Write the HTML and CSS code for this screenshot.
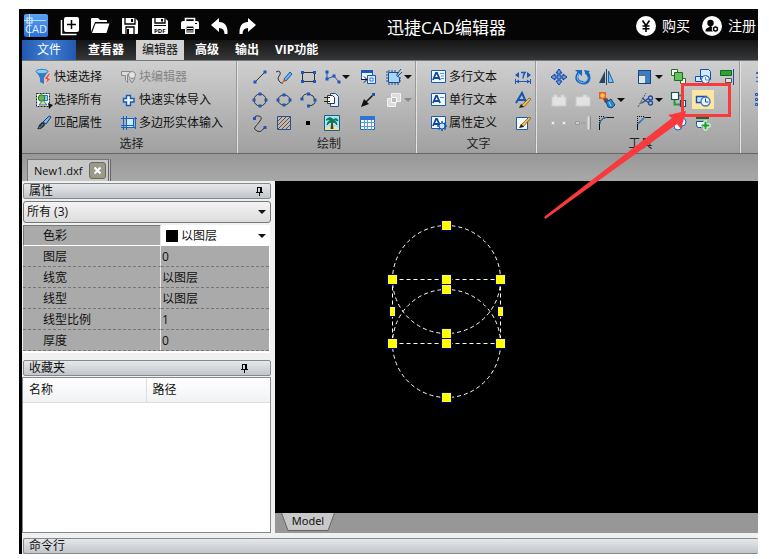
FILE: index.html
```html
<!DOCTYPE html>
<html lang="zh-CN">
<head>
<meta charset="utf-8">
<title>迅捷CAD编辑器</title>
<link rel="stylesheet" href="styles.css">
</head>
<body>
<div class="app">
  <header class="titlebar">
    <svg class="logo" viewBox="0 0 24 23"><defs><linearGradient id="lg" x1="0" y1="0" x2="0" y2="1"><stop offset="0" stop-color="#5aa2f2"/><stop offset="1" stop-color="#2c6fdc"/></linearGradient></defs><rect width="24" height="23" rx="2" fill="url(#lg)"/><path d="M0 6.500h22M5.500 0v23" stroke="#b8dcff"/><rect x="3" y="4" width="5" height="5" fill="none" stroke="#e4f2ff"/><text x="1" y="19" class="logo-text">CAD</text></svg>
    <nav class="quick">
      <button aria-label="新建"><svg viewBox="0 0 20 20"><rect x="4" y="1" width="15" height="15" rx="2" fill="#fff"/><path d="M1.500 4v14.500h15" fill="none" stroke="#fff" stroke-width="1.500"/><path d="M11.500 4v9M7 8.500h9" stroke="#000" stroke-width="1.500"/></svg></button>
      <button aria-label="打开"><svg viewBox="0 0 20 20"><path d="M1 16V3q0-1 1-1h6l2 2h6q1 0 1 1v1H5z" fill="#fff"/><path d="M5.500 7.500H19.500L16.500 17H2z" fill="#fff"/></svg></button>
      <button aria-label="保存"><svg viewBox="0 0 20 20"><path d="M2 3q0-1 1-1h12l3 3v12q0 1-1 1H3q-1 0-1-1z" fill="#fff"/><path d="M5 2v6h10V2M6 18v-7h8v7" fill="#fff" stroke="#000" stroke-width="1.300"/><path d="M12 3v3M8 13v5" stroke="#000" stroke-width="2"/></svg></button>
      <button aria-label="保存为PDF"><svg viewBox="0 0 20 20"><path d="M2 3q0-1 1-1h12l3 3v12q0 1-1 1H3q-1 0-1-1z" fill="#fff"/><path d="M5 2v5h10V2" fill="#fff" stroke="#000" stroke-width="1.300"/><path d="M12 3v2.500" stroke="#000" stroke-width="2"/><path d="M4 9.500h12" stroke="#000"/><text x="4" y="17" class="pdf-text">PDF</text></svg></button>
      <button aria-label="打印"><svg viewBox="0 0 20 20"><path d="M5.500 5V2.500h9V5" fill="none" stroke="#fff" stroke-width="1.600"/><path d="M1 7q0-2 2-2h14q2 0 2 2v6h-4v-3H5v3H1z" fill="#fff"/><rect x="5.800" y="9.800" width="8.400" height="7.400" fill="#000" stroke="#fff" stroke-width="1.600"/><path d="M7 12.500h6M7 15h6" stroke="#fff"/><path d="M15 7.500h2" stroke="#000"/></svg></button>
      <button aria-label="撤销"><svg viewBox="0 0 20 20"><path d="M1 9 9 2v4q9 0 8.500 12h-3q0-6-5.500-6v4z" fill="#fff"/></svg></button>
      <button aria-label="重做" class="redo"><svg viewBox="0 0 20 20"><path d="M19 9 11 2v4Q2 6 2.500 18h3q0-6 5.500-6v4z" fill="#fff"/></svg></button>
    </nav>
    <h1>迅捷CAD编辑器</h1>
    <div class="account">
      <a href="#"><svg viewBox="0 0 20 20"><circle cx="10" cy="10" r="10" fill="#fff"/><path d="M6.500 4.500 10 9.500l3.500-5M10 9v7M6.500 10h7M6.500 12.800h7" fill="none" stroke="#000" stroke-width="1.600"/></svg>购买</a>
      <a href="#"><svg viewBox="0 0 20 20"><circle cx="10" cy="10" r="10" fill="#fff"/><circle cx="8.500" cy="7" r="3.200" fill="#000"/><path d="M7.500 8h2v3q2 .5 3 2v2.500H3.500Q3 12 7.500 11z" fill="#000"/><circle cx="13.500" cy="13" r="3.300" fill="#000" stroke="#fff"/><circle cx="13.500" cy="13" r="1.200" fill="#fff"/></svg>注册</a>
    </div>
  </header>

  <nav class="menu">
    <button class="file">文件</button>
    <button>查看器</button>
    <button class="active">编辑器</button>
    <button>高级</button>
    <button>输出</button>
    <button>VIP功能</button>
  </nav>

  <section class="ribbon">
    <div class="group select">
      <div class="tools">
        <button><svg viewBox="0 0 20 20"><path d="M2 4q6 3 12 0l-4 7v6l-4-2v-4z" fill="#2d7fc4"/><ellipse cx="8" cy="4.500" rx="6" ry="2.200" fill="#8dccf2" stroke="#2d7fc4"/><path d="m15 6-5 6 3 .5-2 5 6-6-3-.5 3-5z" fill="#f04b3e" stroke="#fff" stroke-width=".5"/></svg>快速选择</button>
        <button class="off"><svg viewBox="0 0 20 20"><path d="M2.500 4.500h9v3h-3v8l-2-2v-5h-4z" fill="#ddd" stroke="#888"/><circle cx="13" cy="8" r="3.500" fill="#e4e4e4" stroke="#888"/><path d="m10 12 3 4 3-5" fill="none" stroke="#888"/></svg>块编辑器</button>
        <button><svg viewBox="0 0 20 20"><rect x="2.500" y="3.500" width="13" height="13" fill="#e8f4ee" stroke="#222" stroke-dasharray="2 1"/><path d="M8.500 5.500h5v5h-5z" fill="#8fd0f5" stroke="#2a79ba"/><circle cx="7.500" cy="8" r="3.200" fill="#69b553" stroke="#267029"/><path d="m5 15 4-5 4 5z" fill="#f5d850" stroke="#2a79ba"/><path d="m14 13 5 2-4 4z" fill="#111"/></svg>选择所有</button>
        <button><svg viewBox="0 0 20 20"><path d="M7.500 5.500h4v3H15V12h-3.500v3.500h-4V12H4.500V8.500h3z" fill="#eef8ff" stroke="#1757b5" stroke-width="1.400"/></svg>快速实体导入</button>
        <button><svg viewBox="0 0 20 20"><path d="m9 9 5-5q2-2 3 0l-5 7z" fill="#7db8f0" stroke="#153e78"/><path d="M8 9q3 0 3 3-3 5-8 4 1-1 2-4z" fill="#273444"/><path d="M5 15q3-1 4-4" stroke="#5d88b8" fill="none"/></svg>匹配属性</button>
        <button><svg viewBox="0 0 20 20"><rect x="7" y="6" width="8" height="8" fill="#cbe8ff"/><path d="M4.500 3v14M7.500 3v14M2 5.500h16M2 14.500h15M16.500 4v12M14.500 6v8M2 12.500h13" fill="none" stroke="#1264c8"/></svg>多边形实体输入</button>
      </div>
      <h2>选择</h2>
    </div>

    <div class="group draw">
      <div class="tools">
        <button aria-label="直线"><svg viewBox="0 0 20 20"><path d="m5 15 10-10" stroke="#333"/><path d="M3.500 13.500h3v3h-3zM13.500 3.500h3v3h-3z" fill="#1c56b8"/></svg></button>
        <button aria-label="草图"><svg viewBox="0 0 20 20"><path d="M2 5q3-2 4 0t-1 4 0 5 4 2" fill="none" stroke="#333"/><path d="m10 12 6-7 2 2-6 7z" fill="#6cb4ee" stroke="#1c5aa8"/><path d="m8 16 2-4 2 2z" fill="#e84a2c"/></svg></button>
        <button aria-label="矩形"><svg viewBox="0 0 20 20"><path d="M4.500 5.500h12v9h-12z" fill="none" stroke="#333"/><path d="M3 4h3v3H3zM15 4h3v3h-3zM3 13h3v3H3zM15 13h3v3h-3z" fill="#1c56b8"/></svg></button>
        <button aria-label="多段线"><svg viewBox="0 0 20 20"><path d="M5 5v7l7-3 5 6" fill="none" stroke="#1c56b8"/><path d="M3.500 3.500h3v3h-3zM3.500 10.500h3v3h-3zM10.500 7.500h3v3h-3zM15.500 13.500h3v3h-3z" fill="#1c56b8"/></svg><i></i></button>
        <button aria-label="插入块"><svg viewBox="0 0 20 20"><path d="M3.500 3.500h11v9h-11z" fill="#eaf5ff" stroke="#1c56b8"/><path d="M3 3h12v3H3z" fill="#1c56b8"/><path d="M9.500 8.500h8v8h-8z" fill="#d7edff" stroke="#1c56b8"/><path d="M12 11h3v3h-3z" fill="#fff" stroke="#2f7acd"/><path d="M3 12.500h6m-3-3 3 3-3 3" fill="none" stroke="#111"/></svg></button>
        <button aria-label="边界"><svg viewBox="0 0 20 20"><path d="M4.500 5.500h10l-2 3 3 2v5h-11z" fill="#a8d4f5" stroke="#174e9c"/><path d="M2 5h2m-2 3h2m-2 3h2m-2 3h2m1-11v2m3-2v2m3-2v2m-6 11v2m3-2v2m3-2v2m3-2v2m1-7h2m-2 3h2M17 2l-4 5m5-2-4 4" stroke="#174e9c"/></svg><i></i></button>

        <button aria-label="圆"><svg viewBox="0 0 20 20"><circle cx="10" cy="10" r="6" fill="none" stroke="#333"/><path d="M8.500 2.500h3v3h-3zM8.500 14.500h3v3h-3zM2.500 8.500h3v3h-3zM14.500 8.500h3v3h-3z" fill="#1c56b8"/></svg></button>
        <button aria-label="椭圆"><svg viewBox="0 0 20 20"><ellipse cx="10" cy="10" rx="6" ry="5" fill="none" stroke="#333"/><path d="M8.500 3.500h3v3h-3zM8.500 13.500h3v3h-3zM2.500 8.500h3v3h-3zM14.500 8.500h3v3h-3z" fill="#1c56b8"/></svg></button>
        <button aria-label="圆弧"><svg viewBox="0 0 20 20"><path d="M4 8q2-5 7-4t6 6-6 6" fill="none" stroke="#333"/><path d="M2.500 7.500h3v3h-3zM9 2.500h3v3H9zM15.500 8.500h3v3h-3zM9 14.500h3v3H9z" fill="#1c56b8"/></svg></button>
        <button aria-label="复制块"><svg viewBox="0 0 20 20"><path d="M8.500 3.500h5l3 3v10h-8z" fill="#e6f0fa" stroke="#24528c"/><path d="M5.500 5.500h5l2 2v6h-7z" fill="#fff" stroke="#333"/><path d="M2 7.500h6M2 11.500h6" stroke="#222"/></svg></button>
        <button aria-label="射线"><svg viewBox="0 0 20 20"><path d="m6 14 9-9" stroke="#111" stroke-width="1.500"/><path d="m3 17 3-8 5 5z" fill="#111"/><path d="M14 3h3v3h-3z" fill="#1c56b8"/></svg></button>
        <button aria-label="遮罩" class="off"><svg viewBox="0 0 20 20"><path d="M7.500 3.500h9v8h-9zM3.500 8.500h8v8h-8z" fill="#ddd" stroke="#f2f2f2"/><path d="M7.500 7.500h5v5h-5z" fill="#bbb" stroke="#fafafa"/></svg><i></i></button>

        <button aria-label="样条曲线"><svg viewBox="0 0 20 20"><path d="M4 5q1-3 5-2t1 5-5 6 2 4 7-3" fill="none" stroke="#333"/><path d="M3 4h3v3H3zM13.500 13h3v3h-3z" fill="#1c56b8"/></svg></button>
        <button aria-label="填充"><svg viewBox="0 0 20 20"><path d="M3.500 3.500h13v13h-13z" fill="#c3b8ae" stroke="#24528c"/><path d="m4 8 4-4M4 12l8-8M4 16 16 4M8 16l8-8M12 16l4-4" stroke="#555"/></svg></button>
        <button aria-label="点"><svg viewBox="0 0 20 20"><path d="M8 8h4v4H8z" fill="#000"/></svg></button>
        <button aria-label="图像"><svg viewBox="0 0 20 20"><path d="M2.500 2.500h15v15h-15z" fill="#a8e4f4" stroke="#1a6088"/><path d="M3 15q7-3 14 0v2H3z" fill="#f0e2a0"/><path d="m9.500 7-1 9h3l-1-9z" fill="#5b3d1c"/><path d="M10 7Q7 3 4 7q3-1 5 1-4 0-4 4 2-3 5-3 4 0 5 3 0-4-4-4 2-2 5 0-1-4-5-1-1-3-4-2 2 0 3 2z" fill="#087a55" stroke="#087a55"/></svg></button>
        <button aria-label="表格"><svg viewBox="0 0 20 20"><path d="M2.500 3.500h14v13h-14z" fill="#fff" stroke="#2565bd"/><path d="M2 3h15v4H2z" fill="#2d75d2"/><path d="M3 9.500h14M3 13.500h14M6.500 7v10M9.500 7v10M13.500 7v10" stroke="#569bde"/></svg></button>
      </div>
      <h2>绘制</h2>
    </div>

    <div class="group text">
      <div class="tools">
        <button><svg viewBox="0 0 20 20"><path d="M2.500 3.500h14v12h-14z" fill="#f2f9ff" stroke="#1c5ab0"/><path d="m4 13 3-7h1l3 7M5 11h5" fill="none" stroke="#1048a0" stroke-width="1.800"/><path d="M11 6.500h4M12 9h3M12 11.500h3" stroke="#5591d5"/></svg>多行文本</button>
        <button aria-label="标注文字"><svg viewBox="0 0 20 20"><path d="M3 14.500h14M2.500 12v5M17.500 12v5" stroke="#1c56b8"/><path d="m2 8 4-3v6zM18 8l-4-3v6z" fill="#1c56b8"/><path d="M8 5.500h4q-2 3-2 6" fill="none" stroke="#1c56b8" stroke-width="1.500"/><path d="m3 14.500 3-2v4zM17 14.500l-3-2v4z" fill="#1c56b8"/></svg></button>
        <button><svg viewBox="0 0 20 20"><path d="M2.500 3.500h14v12h-14z" fill="#f2f9ff" stroke="#1c5ab0"/><path d="m4 13 3-7h1l3 7M5 11h5" fill="none" stroke="#1048a0" stroke-width="1.800"/><path d="M11 7.500h4" stroke="#5591d5"/></svg>单行文本</button>
        <button aria-label="文字样式"><svg viewBox="0 0 20 20"><path d="M3 13 9 3l4 9M5 10h7" fill="none" stroke="#1755b5" stroke-width="2"/><path d="m8 16 8-8 2 1-7 8z" fill="#f3ba45" stroke="#725120" stroke-width=".7"/><path d="m6 18 2-4 3 3z" fill="#222"/></svg></button>
        <button><svg viewBox="0 0 20 20"><path d="M2.500 3.500h14v12h-14z" fill="#f2f9ff" stroke="#1c5ab0"/><path d="m4 13 3-7h1l3 7M5 11h5" fill="none" stroke="#1048a0" stroke-width="1.800"/><path d="M13 8v10M8 13h10M9.500 9.500l7 7M16.500 9.500l-7 7" stroke="#1755a7" stroke-width="1.500"/><circle cx="13" cy="13" r="3" fill="#c3e2ff" stroke="#1755a7"/></svg>属性定义</button>
        <button aria-label="编辑文字"><svg viewBox="0 0 20 20"><path d="M3.500 4.500h11v12h-11z" fill="#f8fcff" stroke="#1c5ab0"/><path d="m8 12 8-8 2 1-8 9z" fill="#f3ba45" stroke="#725120" stroke-width=".7"/><path d="m6 15 2-4 3 3z" fill="#222"/></svg></button>
      </div>
      <h2>文字</h2>
    </div>

    <div class="group modify">
      <div class="tools">
        <button aria-label="移动"><svg viewBox="0 0 20 20"><path d="m10 2 3 4h-2v3h3V7l4 3-4 3v-2h-3v3h2l-3 4-3-4h2v-3H6v2l-4-3 4-3v2h3V6H7z" fill="#5c9aed" stroke="#143e9c"/></svg></button>
        <button aria-label="旋转"><svg viewBox="0 0 20 20"><path d="M6 5q-5 7 1 10 8 3 9-4 0-4-3-6" fill="none" stroke="#1768bd" stroke-width="3"/><path d="M6 6q-4 6 1 9 7 2 8-5" fill="none" stroke="#74bfff"/><path d="M2 3h7l0 6zM11 3l6 1-4 4z" fill="#1768bd"/></svg></button>
        <button aria-label="镜像"><svg viewBox="0 0 20 20"><path d="M8 4v12H2z" fill="#234666"/><path d="M11.500 4v11.500h5z" fill="#76bdf2" stroke="#24649a"/><path d="M9.500 2v16" stroke="#234666"/></svg></button>
        <button aria-label="缩放"><svg viewBox="0 0 20 20"><path d="M3 3h13v14h-5V8H3z" fill="#387ec5"/><path d="M3.500 3.500h12v13h-12z" fill="none" stroke="#184482"/><path d="M4 9h7v7H4z" fill="#d8e6f0"/><path d="M3.500 8.500h7v8" fill="none" stroke="#111" stroke-dasharray="1 1"/></svg><i></i></button>
        <button aria-label="置于前"><svg viewBox="0 0 20 20"><path d="M2.500 2.500h6v6h-6zM11.500 11.500h5v5h-5z" fill="#f7fff7" stroke="#247026"/><path d="M5.500 5.500h8v8h-8z" fill="#67c15c" stroke="#15701b"/></svg></button>
        <button aria-label="置于后"><svg viewBox="0 0 20 20"><path d="M7.500 2.500h8l2 2v8h-10zM2.500 9.500h8v5h-8z" fill="#d2e9ff" stroke="#174da2"/><circle cx="12.500" cy="12.500" r="4" fill="#e9f5ff" stroke="#174da2"/><path d="M12.500 10v3h4" fill="none" stroke="#5591d5"/></svg></button>
        <button aria-label="对齐"><svg viewBox="0 0 20 20"><path d="M3.500 3.500h11v5h-11z" fill="#24a833" stroke="#17681c"/><path d="M8.500 11.500h6v4h-6z" fill="#ddd" stroke="#555"/><path d="M16.500 2v16" stroke="#174da2"/></svg></button>

        <button aria-label="编组" class="off"><svg viewBox="0 0 20 20"><path d="M3 7h2V5h3v2h4V5h3v2h2v9H3z" fill="#e2e2e2" stroke="#ccc"/></svg></button>
        <button aria-label="取消编组" class="off"><svg viewBox="0 0 20 20"><path d="M3 7h7V5h4v2h3v9H3z" fill="#e2e2e2" stroke="#ccc"/></svg></button>
        <button aria-label="分解"><svg viewBox="0 0 20 20"><path d="M2 2h7v7H2z" fill="#eb5e28"/><circle cx="5.500" cy="5.500" r="2.200" fill="#ffc65a"/><path d="m6 9 4-1 2 3-4 2z" fill="#704830"/><path d="m9 12 5-3 4 6-3 3-4-1z" fill="#258ad3" stroke="#134d85"/><path d="m12 12 2 4" stroke="#aee3ff"/></svg><i></i></button>
        <button aria-label="修剪"><svg viewBox="0 0 20 20"><path d="m3 17 8-14M5 13h3" stroke="#555" stroke-dasharray="2 1"/><path d="m7 8 7 5m-7 0 7-5" stroke="#234c9a" stroke-width="1.300"/><circle cx="15.500" cy="8" r="2" fill="none" stroke="#234c9a" stroke-width="1.300"/><circle cx="15.500" cy="13" r="2" fill="none" stroke="#234c9a" stroke-width="1.300"/></svg><i></i></button>
        <button aria-label="顺序"><svg viewBox="0 0 20 20"><path d="M9 5.500h4.500V10M5.500 9v5.500H11" fill="none" stroke="#269a36" stroke-width="2"/><path d="M2.500 2.500h7v7h-7zM11.500 10.500h5v6h-5z" fill="#f6fffb" stroke="#174f5e" stroke-width="1.200"/></svg></button>
        <button aria-label="轮廓" class="lit"><svg viewBox="0 0 20 20"><path d="M3.500 6.500h10v6h-10z" fill="#c8e6ff" stroke="#174da2" stroke-width="1.400"/><circle cx="12.500" cy="11.500" r="4.500" fill="#e9f5ff" stroke="#4a78be" stroke-width="1.400"/><path d="M12.500 8.500v3.500h3" fill="none" stroke="#174da2"/></svg></button>
        <span></span>

        <button aria-label="打断" class="off"><svg viewBox="0 0 20 20"><path d="M2.500 8.500h3v3h-3zM13.500 8.500h3v3h-3z" fill="#eee" stroke="#bbb"/><path d="M7 10h1M11 10h1" stroke="#aaa"/></svg></button>
        <button aria-label="延伸" class="off"><svg viewBox="0 0 20 20"><path d="M2.500 8.500h4v3h-4zM8 10h5" fill="#ccc" stroke="#999"/><path d="M15.500 3.500v13" stroke="#ddd" stroke-width="2"/><path d="M17.500 3.500v13" stroke="#888"/></svg></button>
        <button aria-label="圆角"><svg viewBox="0 0 20 20"><path d="M2.500 17v-6q1-6 7-6.500H17" fill="none" stroke="#111"/><path d="M2 3.500h6M2.500 3v7" stroke="#111" stroke-dasharray="1 1"/><path d="M3 11q0-6 7-7" fill="none" stroke="#2678c5"/></svg></button>
        <button aria-label="倒角"><svg viewBox="0 0 20 20"><path d="M2.500 17v-6l7-6.500H16" fill="none" stroke="#111"/><path d="M2 3.500h7M2.500 3v7" stroke="#111" stroke-dasharray="1 1"/><path d="m3 11 7-7" stroke="#2678c5" stroke-width="1.500"/></svg></button>
        <button aria-label="链接"><svg viewBox="0 0 20 20"><circle cx="9" cy="13" r="4" fill="#eaf5ff" stroke="#2462b4"/><circle cx="13" cy="9" r="4" fill="#eaf5ff" stroke="#2462b4"/></svg></button>
        <button aria-label="添加"><svg viewBox="0 0 20 20"><path d="M3 3h13v3H3z" fill="#176a26"/><path d="M3.500 8.500h11v6h-9q-2 0-2-3z" fill="#e9f5ff" stroke="#174d82"/><path d="M11 8h3v3h3v3h-3v3h-3v-3H8v-3h3z" fill="#21a52e" stroke="#f4fff4"/></svg></button>
      </div>
      <h2>工具</h2>
    </div>

    <div class="group more">
      <div class="tools">
        <button aria-label="图层"><svg viewBox="0 0 20 20"><path d="m3 6 7-3 7 3-7 3zM3 10l7 3 7-3M3 14l7 3 7-3" fill="#c6e4ff" stroke="#1c56b8"/></svg></button>
        <button aria-label="阵列"><svg viewBox="0 0 20 20"><path d="M2.500 3.500h2v2h-2zM2.500 8.500h2v2h-2zM2.500 13.500h2v2h-2zM7.500 3.500h2v2h-2zM7.500 8.500h2v2h-2zM7.500 13.500h2v2h-2z" fill="#8fc1f3" stroke="#1c56b8"/></svg></button>
      </div>
    </div>
  </section>

  <div class="docs">
    <div class="doc">New1.dxf<button aria-label="关闭"><svg viewBox="0 0 9 9"><path d="m1.500 1.500 6 6m0-6-6 6" stroke="#fff" stroke-width="2"/></svg></button></div>
  </div>

  <main class="work">
    <aside class="side">
      <h3 class="bar">属性<svg class="pin" viewBox="0 0 9 10"><path d="M2.500 1v5M2 1.500h4M5.500 1v5M6.500 1v5M1 6.500h7M4.500 6v4" stroke="#000"/></svg></h3>
      <label class="combo"><select aria-label="选择对象"><option>所有 (3)</option></select><i></i></label>
      <table class="props">
        <tr class="current"><th>色彩</th><td><label class="color"><span class="swatch"></span><select aria-label="色彩"><option>以图层</option></select><i></i></label></td></tr>
        <tr><th>图层</th><td>0</td></tr>
        <tr><th>线宽</th><td>以图层</td></tr>
        <tr><th>线型</th><td>以图层</td></tr>
        <tr><th>线型比例</th><td>1</td></tr>
        <tr><th>厚度</th><td>0</td></tr>
      </table>
      <h3 class="bar fav">收藏夹<svg class="pin" viewBox="0 0 9 10"><path d="M2.500 1v5M2 1.500h4M5.500 1v5M6.500 1v5M1 6.500h7M4.500 6v4" stroke="#000"/></svg></h3>
      <div class="list">
        <table><tr><th>名称</th><th>路径</th></tr></table>
      </div>
    </aside>
    <section class="view">
      <svg class="drawing">
        <g fill="none" stroke="#fff" stroke-dasharray="4 3">
          <circle cx="171.500" cy="98.500" r="54"/>
          <circle cx="171.500" cy="162.500" r="54"/>
          <path d="M117.500 98.500h108M117.500 162.500h108M117.500 98.500v64M225.500 98.500v64"/>
        </g>
        <g fill="#ff0" stroke="#00008c">
          <rect x="114.500" y="125.500" width="6" height="10"/>
          <rect x="222.500" y="125.500" width="6" height="10"/>
          <rect x="166.500" y="39.500" width="10" height="10"/>
          <rect x="112.500" y="93.500" width="10" height="10"/>
          <rect x="166.500" y="93.500" width="10" height="10"/>
          <rect x="220.500" y="93.500" width="10" height="10"/>
          <rect x="166.500" y="103.500" width="10" height="10"/>
          <rect x="166.500" y="147.500" width="10" height="10"/>
          <rect x="112.500" y="157.500" width="10" height="10"/>
          <rect x="166.500" y="157.500" width="10" height="10"/>
          <rect x="220.500" y="157.500" width="10" height="10"/>
          <rect x="166.500" y="211.500" width="10" height="10"/>
        </g>
      </svg>
      <div class="sheets"><button><svg viewBox="0 0 54 19"><path d="M.5 0 7 17.500h40L53.500 0" fill="#c8c8c8" stroke="#666"/></svg><span>Model</span></button></div>
    </section>
  </main>
  <h3 class="bar command">命令行</h3>

  <svg class="callout" viewBox="0 0 190 140">
    <rect x="138.500" y="4.500" width="47" height="31" fill="none" stroke="#f83a3c" stroke-width="3"/>
    <path d="M1.500 139 0 137 128 38 124 35 142 31 137 49 133 44z" fill="#f83a3c"/>
  </svg>
</div>
</body>
</html>
```
FILE: styles.css
```css
* {
  box-sizing: border-box;
}

body {
  margin: 0;
  background: #fff;
  color: #111;
  font: 12px/20px "Open Sans", "Noto Sans CJK SC", sans-serif;
}

h1, h2, h3 {
  margin: 0;
  font-weight: 400;
}

button, select {
  margin: 0;
  padding: 0;
  border: 0;
  background: none;
  color: inherit;
  font: inherit;
}

svg {
  display: block;
  flex: none;
}

/* small drop-down arrow */
i {
  flex: none;
  border: 4px solid transparent;
  border-top-color: #111;
  border-bottom-width: 0;
}

.app {
  position: relative;
  display: flex;
  flex-direction: column;
  height: calc(100vh - 14px);
  margin: 9px 11px 5px 19px;
  border-left: 3px solid #000;
  background: #f0f0f0;
  overflow: hidden;
}

/* title bar */
.titlebar {
  display: flex;
  align-items: center;
  height: 31px;
  padding: 2px 2px 0;
  background: #050505;
  color: #fff;
}

.logo {
  width: 24px;
  height: 23px;
}

.logo-text {
  fill: #e4f2ff;
  font-size: 11px;
}

.pdf-text {
  fill: #000;
  font-size: 6px;
  font-weight: 700;
}

.quick {
  display: flex;
  gap: 10px;
  margin-left: 12px;
}

.quick svg {
  width: 20px;
  height: 20px;
}

.quick .redo {
  margin-left: -3px;
}

.titlebar h1 {
  flex: 1;
  padding-top: 4px;
  font-size: 17px;
  line-height: 24px;
  text-align: center;
}

.account {
  display: flex;
  gap: 12px;
}

.account a {
  display: flex;
  align-items: center;
  gap: 6px;
  color: #fff;
  font-size: 14px;
  text-decoration: none;
}

.account svg {
  width: 20px;
  height: 20px;
}

/* menu tabs */
.menu {
  display: flex;
  height: 20px;
  background: linear-gradient(#151515, #363739);
  color: #fff;
  font-weight: 700;
}

.menu button {
  padding: 0 8px;
}

.menu .file {
  width: 54px;
  margin-right: 4px;
  background: linear-gradient(90deg, #2358b0, #3f7fd4 50%, #2358b0);
  font-weight: 400;
}

.menu .active {
  padding: 0 6px;
  margin: 0 3px 0 4px;
  background: #d2d2d2;
  color: #111;
  font-weight: 400;
}

/* ribbon */
.ribbon {
  display: flex;
  height: 94px;
  border-top: 1px solid #777;
  border-bottom: 1px solid #666;
  background: linear-gradient(#cfcfcf, #a0a0a0);
}

.group {
  flex: none;
  padding: 4px 0 0 10px;
  border-right: 1px solid #e2e2e2;
  box-shadow: -1px 0 #999 inset;
}

.group h2 {
  padding-right: 6px;
  color: #222;
  font-size: 12px;
  line-height: 20px;
  text-align: center;
}

.tools {
  display: grid;
  grid-auto-rows: 23px;
}

.tools button {
  display: flex;
  align-items: center;
  padding: 0 2px;
  white-space: nowrap;
}

.tools svg {
  width: 20px;
  height: 20px;
}

.tools .off {
  color: #858585;
}

.tools .off i {
  border-top-color: #888;
}

.select {
  width: 216px;
}

.select .tools {
  grid-template-columns: 85px auto;
}

.draw {
  width: 179px;
}

.draw .tools {
  grid-template-columns: 24px 24px 24px 36px 26px 34px;
}

.text {
  width: 120px;
}

.text .tools {
  grid-template-columns: 84px 24px;
}

.modify {
  width: 204px;
}

.modify .tools {
  grid-template-columns: 24px 24px 38px 34px 24px 24px 24px;
}

.modify .lit {
  justify-self: start;
  padding: 0 1px;
  margin: 2px 1px;
  background: #fbe6a2;
}

.more {
  flex: 1;
  min-width: 0;
  border: 0;
  box-shadow: none;
  overflow: hidden;
}

/* open documents */
.docs {
  display: flex;
  align-items: flex-end;
  height: 27px;
  padding-left: 5px;
  background: linear-gradient(#989898, #a8a8a8);
}

.doc {
  display: flex;
  align-items: center;
  gap: 7px;
  height: 22px;
  padding: 0 2px 0 6px;
  border: 1px solid #777;
  border-right: 3px double #666;
  border-bottom: 0;
  background: #c8c8c8;
  font-size: 11px;
}

.doc button {
  display: grid;
  place-items: center;
  width: 17px;
  height: 17px;
  border: 1px solid #6c6c60;
  border-radius: 3px;
  background: #999a88;
}

.doc svg {
  width: 9px;
  height: 9px;
}

/* work area */
.work {
  display: flex;
  flex: 1;
  min-height: 0;
}

.side {
  display: flex;
  flex: none;
  flex-direction: column;
  width: 253px;
  padding: 2px 4px 0 0;
}

.bar {
  display: flex;
  flex: none;
  align-items: center;
  justify-content: space-between;
  height: 16px;
  margin-left: 1px;
  padding: 0 6px 0 5px;
  border: 1px solid #85888d;
  border-radius: 2px;
  background: linear-gradient(#e6e8eb, #c2c5ca);
  font-size: 12px;
  line-height: 14px;
}

.pin {
  width: 9px;
  height: 10px;
}

.combo {
  display: flex;
  align-items: center;
  height: 22px;
  margin: 2px 0 2px 1px;
  padding-right: 4px;
  border: 1px solid #777;
  border-radius: 3px;
  background: linear-gradient(#f4f4f4, #dcdcdc);
}

.combo select, .color select {
  flex: 1;
  min-width: 0;
  appearance: none;
}

.combo select {
  padding-left: 3px;
}

.props {
  width: 247px;
  margin-left: 1px;
  border-right: 1px solid #fff;
  border-bottom: 2px solid #fff;
  border-spacing: 0;
  background: #aaa;
  table-layout: fixed;
}

.props th, .props td {
  height: 21px;
  padding: 2px 0 0;
  border-bottom: 1px dashed #777;
  font-weight: 400;
  line-height: 18px;
  text-align: left;
}

.props th {
  width: 138px;
  padding-left: 20px;
  border-right: 1px solid #e8e8e8;
}

.props td {
  padding-left: 1px;
}

.props .current th {
  padding-top: 1px;
  padding-left: 19px;
  border-top: 1px solid #777;
  border-left: 1px solid #777;
  border-bottom: 1px solid #fff;
}

.props .current td {
  border-bottom: 1px solid #fff;
  background: #fff;
}

.color {
  display: flex;
  align-items: center;
  gap: 3px;
  height: 18px;
  padding: 0 3px 0 4px;
}

.swatch {
  width: 12px;
  height: 12px;
  background: #000;
}

.fav {
  margin-top: 7px;
  padding-right: 21px;
}

.list {
  flex: 1;
  min-height: 0;
  margin-top: 1px;
  border: 1px solid #85888d;
  background: #fff;
}

.list table {
  width: 100%;
  border-spacing: 0;
  table-layout: fixed;
}

.list th {
  height: 25px;
  padding: 0 6px;
  border-bottom: 1px solid #ddd;
  background: linear-gradient(#fff, #f1f2f4);
  font-weight: 400;
  text-align: left;
}

.list th:first-child {
  width: 50%;
  border-right: 1px solid #ddd;
}

/* drawing area */
.view {
  display: flex;
  flex: 1;
  flex-direction: column;
  min-width: 0;
}

.drawing {
  flex: 1;
  width: 100%;
  min-height: 0;
  background: #000;
}

.sheets {
  height: 20px;
  padding-left: 6px;
  background: #979797;
}

.sheets button {
  display: grid;
  width: 54px;
  height: 19px;
  font-family: "Noto Sans", sans-serif;
  font-size: 11px;
  line-height: 16px;
}

.sheets svg, .sheets span {
  grid-area: 1 / 1;
}

.sheets svg {
  width: 54px;
  height: 19px;
}

.command {
  margin-top: 5px;
  border-right: 0;
}

/* callout over the ribbon */
.callout {
  position: absolute;
  top: 71px;
  left: 522px;
  width: 190px;
  height: 140px;
  pointer-events: none;
}
```
